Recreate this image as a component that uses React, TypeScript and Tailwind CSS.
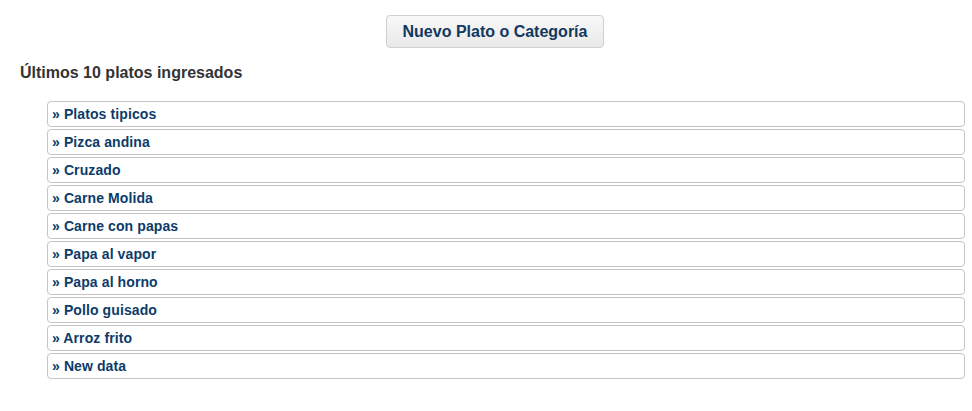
import React from "react";

const platos = [
  "Platos tipicos",
  "Pizca andina",
  "Cruzado",
  "Carne Molida",
  "Carne con papas",
  "Papa al vapor",
  "Papa al horno",
  "Pollo guisado",
  "Arroz frito",
  "New data",
];

const App: React.FC = () => {
  return (
    <div className="min-h-screen bg-white font-['Liberation_Sans',Arial,sans-serif] text-[#333]">
      {/* Top action */}
      <div className="flex justify-center pl-[20px] pr-[2px] pt-[15px]">
        <button className="h-[33px] w-[218px] rounded-[4px] border border-[#d0d0d0] bg-gradient-to-b from-[#f8f8f8] to-[#e9e9e9] text-[16px] font-bold text-[#12385f]">
          Nuevo Plato o Categoría
        </button>
      </div>

      <h3 className="mt-[15px] pl-[20px] text-[16px] font-bold leading-[20px] text-[#333]">
        Últimos 10 platos ingresados
      </h3>

      {/* List */}
      <ul className="mt-[18px] flex flex-col gap-[2px] pl-[47px] pr-[7px]">
        {platos.map((p) => (
          <li
            key={p}
            className="flex h-[26px] items-center rounded-[4px] border border-[#c4c4c4] pl-[4px] text-[14px] font-bold tracking-[0.1px] text-[#0d3b69]"
          >
            <a href="#">» {p}</a>
          </li>
        ))}
      </ul>
    </div>
  );
};

export default App;
